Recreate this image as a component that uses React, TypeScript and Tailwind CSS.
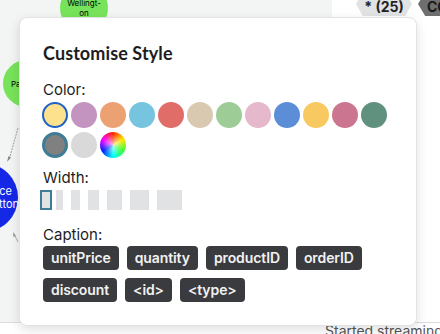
import React from 'react';

const colors = [
  '#fde18c', '#c394c0', '#eca173', '#76c4de', '#e06d68', '#d9c9b1',
  '#9dcc97', '#e5b9cb', '#5b8ed7', '#f8c960', '#cc7591', '#60917f',
];

const widths = [7, 9, 11, 15, 19, 25];

const captions = [
  ['unitPrice', 'quantity', 'productID', 'orderID'],
  ['discount', '<id>', '<type>'],
];

const Chip = ({ label }: { label: string }) => (
  <div className="h-6 px-2 flex items-center rounded bg-[#3a3b3f] text-[#f2f2f2] text-[14px] font-semibold leading-none tracking-[-0.1px]">
    {label}
  </div>
);

const App = () => {
  return (
    <div className="relative w-[440px] h-[334px] overflow-hidden bg-white font-['Inter',sans-serif] text-[#1d1d1f]">
      {/* canvas + status strip */}
      <div className="flex h-[322px]">
        <div className="w-[332px] bg-[#f3f4f4]" />
        <div className="flex-1 bg-white" />
      </div>
      <div className="h-[12px] border-t border-[#dcdcdc] pl-[325px] text-[14px] leading-[16px] text-[#555] whitespace-nowrap">
        Started streaming 25 records
      </div>

      {/* graph nodes */}
      <div className="absolute left-[60px] top-[-16px] w-[48px] h-[48px] rounded-full bg-[#77e35a] flex flex-col items-center justify-end pb-[14px] text-[8px] leading-[10px] text-black">
        <span>Wellingt-</span>
        <span>on</span>
      </div>
      <div className="absolute left-[3px] top-[60px] w-[47px] h-[47px] rounded-full bg-[#77e35a] flex items-center pl-[8px] text-[8px] text-black">
        Pa
      </div>
      <svg className="absolute left-0 top-[120px]" width="30" height="130" viewBox="0 0 30 130">
        <line x1="18" y1="8" x2="9" y2="40" stroke="#888" strokeWidth="0.8" strokeDasharray="2 1" />
        <path d="M7 42 L8.5 36 L11 37.5 Z" fill="#888" />
        <line x1="18" y1="122" x2="14" y2="114" stroke="#999" strokeWidth="0.8" />
        <path d="M13 112 L16 116 L13.5 117 Z" fill="#999" />
      </svg>
      <div className="absolute left-[-52px] top-[163px] w-[70px] h-[69px] rounded-full bg-[#1428e6] flex flex-col items-end justify-center text-[11px] leading-[13px] text-white">
        <span className="mr-[6px]">Device</span>
        <span className="mr-[-1px]">Button</span>
      </div>
      <div className="absolute left-[356px] top-[-8px] h-[24px] w-[56px] bg-[#e1e2e4] [clip-path:polygon(12%_0,88%_0,100%_50%,88%_100%,12%_100%,0_50%)] flex items-end justify-center pb-[1px] text-[14px] font-bold leading-[16px] text-[#222]">
        * (25)
      </div>
      <div className="absolute left-[418px] top-[-8px] h-[24px] w-[60px] bg-[#6f6f6f] [clip-path:polygon(12%_0,88%_0,100%_50%,88%_100%,12%_100%,0_50%)] flex items-end pl-[9px] pb-[1px] text-[14px] font-bold leading-[16px] text-[#1a1a1a]">
        CO
      </div>

      {/* popover */}
      <div className="absolute left-[19px] top-[17px] w-[398px] h-[309px] rounded-lg bg-white border border-[#e3e3e3] shadow-[0_4px_12px_rgba(0,0,0,0.12)] pt-[23px] px-[23px]">
        <div className="font-['Lato',sans-serif] text-[18px] leading-[24px] font-bold tracking-[0.1px]">Customise Style</div>

        <div className="mt-[15px] text-[15px] leading-[20px]">Color:</div>
        <div className="mt-[2px] flex flex-wrap gap-x-[3px] gap-y-[4px] w-[345px] -ml-[1px]">
          {colors.map((c, i) => (
            <div
              key={c}
              className={i === 0 ? 'w-[26px] h-[26px] rounded-full border-2 border-[#1f62c8]' : 'w-[26px] h-[26px] rounded-full'}
              style={{ background: c }}
            />
          ))}
          <div className="w-[26px] h-[26px] rounded-full bg-[#808080] border-[3px] border-[#3f7c96]" />
          <div className="w-[26px] h-[26px] rounded-full bg-[#d9d9d9]" />
          <div className="w-[26px] h-[26px] rounded-full bg-[radial-gradient(circle,rgba(255,255,255,0.7),rgba(255,255,255,0)_60%),conic-gradient(#ff2a00,#ffe600,#33ff33,#00ffff,#0022ff,#ff00ff,#ff2a00)]" />
        </div>

        <div className="mt-[10px] text-[15px] leading-[20px]">Width:</div>
        <div className="mt-[2px] flex gap-2 -ml-[3px]">
          <div className="w-[12px] h-[20px] border-2 border-[#3f7c96] bg-[#e1e2e4] mr-[-4px]" />
          {widths.map((w) => (
            <div key={w} className="h-[20px] bg-[#e1e2e4]" style={{ width: w }} />
          ))}
        </div>

        <div className="mt-[15px] text-[15px] leading-[20px]">Caption:</div>
        <div className="mt-[1px] flex flex-col gap-2">
          {captions.map((row, i) => (
            <div key={i} className="flex gap-2">
              {row.map((c) => (
                <Chip key={c} label={c} />
              ))}
            </div>
          ))}
        </div>
      </div>
    </div>
  );
};

export default App;
